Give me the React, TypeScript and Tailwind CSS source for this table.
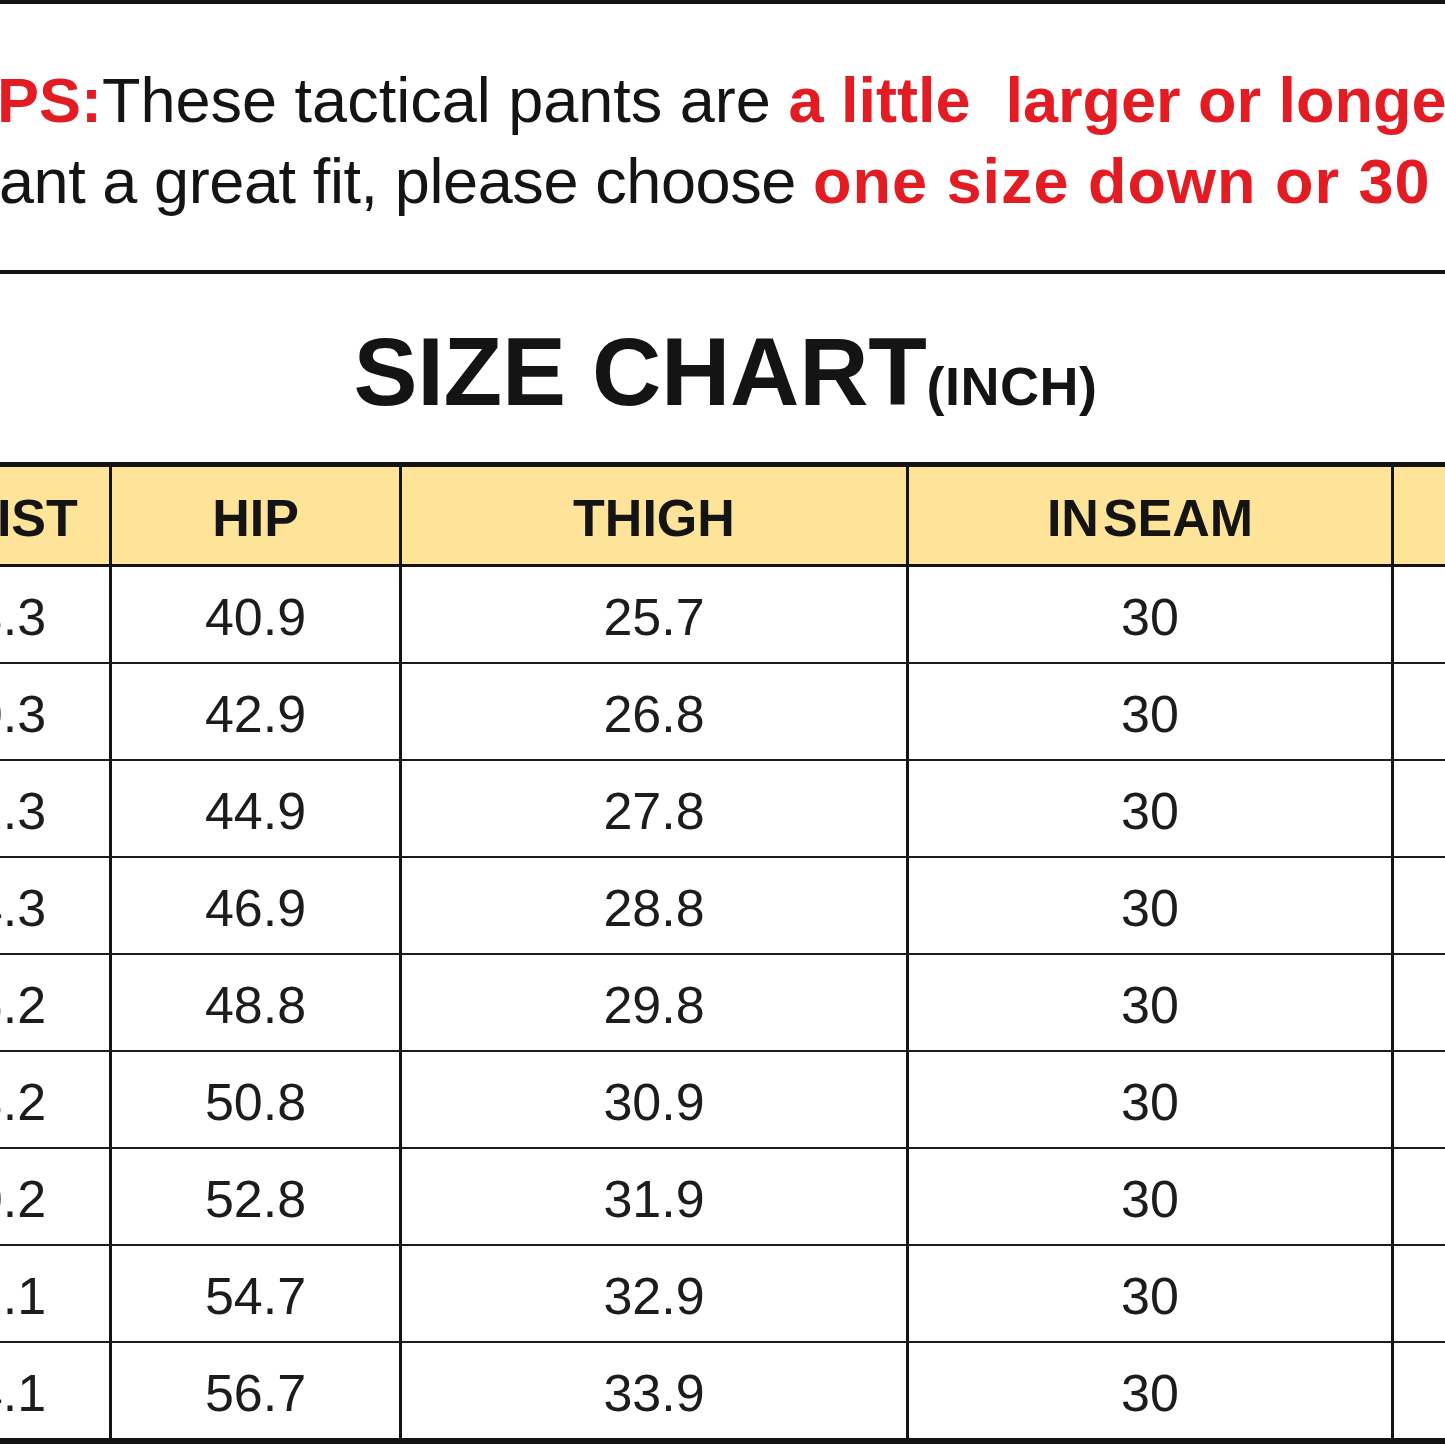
const rows = [
  { waist: "28.3", hip: "40.9", thigh: "25.7", inseam: "30" },
  { waist: "30.3", hip: "42.9", thigh: "26.8", inseam: "30" },
  { waist: "32.3", hip: "44.9", thigh: "27.8", inseam: "30" },
  { waist: "34.3", hip: "46.9", thigh: "28.8", inseam: "30" },
  { waist: "36.2", hip: "48.8", thigh: "29.8", inseam: "30" },
  { waist: "38.2", hip: "50.8", thigh: "30.9", inseam: "30" },
  { waist: "40.2", hip: "52.8", thigh: "31.9", inseam: "30" },
  { waist: "42.1", hip: "54.7", thigh: "32.9", inseam: "30" },
  { waist: "44.1", hip: "56.7", thigh: "33.9", inseam: "30" },
];

const Cell = ({ w, children, last }: { w: string; children?: React.ReactNode; last?: boolean }) => (
  <div className={`${w} shrink-0 flex items-center justify-center pt-[4px] ${last ? "" : "border-r-[3px] border-[#141414]"}`}>
    {children}
  </div>
);

export default function App() {
  return (
    <div className="w-[1445px] h-[1445px] overflow-hidden bg-white text-[#141414] font-['Liberation_Sans',Arial,sans-serif]">
      {/* tips */}
      <div className="h-[270px] border-t-4 border-[#141414] pt-[56px] text-[63px] leading-[81px] whitespace-pre">
        <div className="ml-[-59px]">
          <span className="font-bold text-[#e31b23]">TIPS:</span>
          <span>These tactical pants are </span>
          <span className="font-bold text-[#e31b23]">a little  larger or longer</span>
        </div>
        <div className="ml-[-215px]">
          <span className="tracking-[-0.4px]">If you want a great fit, please choose </span>
          <span className="font-bold text-[#e31b23] tracking-[1px]">one size down or 30</span>
        </div>
      </div>

      {/* title */}
      <div className="h-[192px] border-t-4 border-[#141414] pt-[50px] flex items-baseline justify-center pl-[6px]">
        <span className="text-[96px] leading-none font-bold tracking-[-0.3px]">SIZE CHART</span>
        <span className="text-[54px] leading-none font-bold tracking-[0.5px]">(INCH)</span>
      </div>

      {/* table */}
      <div className="ml-[-118px] border-t-[5px] border-b-[6px] border-[#141414]">
        <div className="flex h-[100px] bg-[#fde498] border-b-[3px] border-[#141414] text-[52px] leading-none font-bold">
          <Cell w="w-[230px]">WAIST</Cell>
          <Cell w="w-[290px]">HIP</Cell>
          <Cell w="w-[507px]">THIGH</Cell>
          <Cell w="w-[485px]">
            IN<span className="ml-[4px]">SEAM</span>
          </Cell>
          <Cell w="w-[400px]" last />
        </div>
        {rows.map((r, i) => (
          <div
            key={r.hip}
            className={`flex text-[52px] leading-none text-[#1c1c1c] ${
              i < rows.length - 1 ? "h-[97px] border-b-2 border-[#1c1c1c]" : "h-[95px]"
            }`}
          >
            <Cell w="w-[230px]">{r.waist}</Cell>
            <Cell w="w-[290px]">{r.hip}</Cell>
            <Cell w="w-[507px]">{r.thigh}</Cell>
            <Cell w="w-[485px]">{r.inseam}</Cell>
            <Cell w="w-[400px]" last />
          </div>
        ))}
      </div>
    </div>
  );
}
